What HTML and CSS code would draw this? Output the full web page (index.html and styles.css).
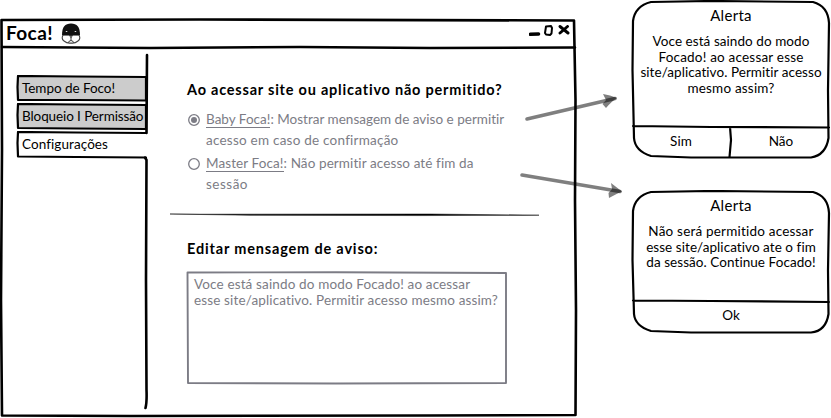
FILE: index.html
```html
<!DOCTYPE html>
<html lang="pt">
<head>
<meta charset="utf-8">
<title>Foca!</title>
<link rel="stylesheet" href="styles.css">
</head>
<body>
<main class="board">
  <section class="window">
    <svg class="frame" width="578" height="400" viewBox="0 18 578 400">
      <path d="M1.5 20L200 19.5L574 20.5L575.5 100L575 200L576 310L575.5 415L430 415.5L130 416L2 415.5L1 300L2 150Z"/>
      <path d="M2 47L150 48L300 47L430 48L575 47.5"/>
      <path d="M147 55L146.500 133M145 157.500L146.500 160L146 280L146.500 390Q147 402 145.500 408"/>
    </svg>
    <header class="titlebar">
      <h1 class="title">Foca!</h1>
      <svg class="seal" width="20" height="22" viewBox="0 0 20 22">
        <path d="M1 12C1 4 4 0.500 10 0.500S19 4 19 12Z" fill="#111"/>
        <path d="M2 12Q0 16 3 18Q6 20.500 10 20Q14 20.500 17 18Q20 16 18 12Z" fill="#fff" stroke="#444" stroke-width="1.1"/>
        <path d="M1.500 11.500H18.500" stroke="#111" stroke-width="1.5"/>
        <path d="M8.500 12.500H11.500L10 14.500ZM10 14V17M7.500 19.500Q8 17.500 10 17.500Q12 17.500 12.500 19.500" stroke="#222" stroke-width=".9"/>
        <path d="M4.800 8.500H6.300M13.700 8.500H15.200" stroke="#ddd" stroke-width="1.2"/>
      </svg>
      <svg class="controls" width="44" height="16" viewBox="0 0 44 16">
        <path d="M1.500 9.300L9.500 9" stroke-width="3.600"/>
        <path d="M17 1.500L22 1L23 3L22.500 8.500L21 10L17 9.500L16 8Z" stroke-width="2"/>
        <path d="M31 1.500L39 8M38.500 1.500L31 8" stroke-width="2.900"/>
      </svg>
    </header>
    <div class="body">
      <nav class="tabs">
        <a class="tab tab-one"><svg class="frame" width="131" height="28" viewBox="0 0 131 28"><path class="shade" d="M130 2L60 1.500L2 1L1.500 12L2 25L60 25L130 25.500Z"/></svg><span>Tempo de Foco!</span></a>
        <a class="tab tab-two"><svg class="frame" width="131" height="28" viewBox="0 0 131 28"><path class="shade" d="M130 2L60 1.500L2 1L1.500 12L2 25L60 25.500L130 26Z"/></svg><span>Bloqueio I Permissão</span></a>
        <a class="tab tab-three"><svg class="frame" width="131" height="28" viewBox="0 0 131 28"><path d="M130 2L60 1.500L2 1L1.500 12L2 25.500L60 26L130 26.500"/></svg><span>Configurações</span></a>
      </nav>
      <section class="content">
        <h2 class="question">Ao acessar site ou aplicativo não permitido?</h2>
        <div class="option">
          <svg class="radio" width="14" height="14"><circle cx="7" cy="7" r="5.300"/><circle class="dot" cx="7" cy="7" r="3"/></svg>
          <p><span class="o1"><u>Baby Foca!</u>: Mostrar mensagem de aviso e permitir</span><br><span class="o2">acesso em caso de confirmação</span></p>
        </div>
        <div class="option">
          <svg class="radio" width="14" height="14"><circle cx="7" cy="7" r="5.300"/></svg>
          <p><span class="o3"><u>Master Foca!</u>: Não permitir acesso até fim da</span><br><span class="o4">sessão</span></p>
        </div>
        <svg class="divider" width="370" height="4"><path d="M0 1L30 1.200L260 1L369 2.200L250 2.600L80 2.300Z"/></svg>
        <h2 class="edit">Editar mensagem de aviso:</h2>
        <div class="message">
          <svg class="frame" width="322" height="114"><path d="M1.500 1.500L150 1.200L320 2L320 112L150 112.500L2 112Z"/></svg>
          <p>Voce está saindo do modo Focado! ao acessar<br>esse site/aplicativo. Permitir acesso mesmo assim?</p>
        </div>
      </section>
    </div>
  </section>
  <aside class="alerts">
    <section class="alert alert-confirm">
      <svg class="frame" width="200" height="160"><path d="M20 2L80 1L182 2Q197 6 198 23L197 90L197.500 138Q195 155 180 157.500L60 157.500L20 156Q4 151 3 138L1.500 70L2 21Q4 6 20 2ZM2 126L80 127L198 127.500M99 127L100 140L98.500 157"/></svg>
      <h3>Alerta</h3>
      <p>Voce está saindo do modo<br><span class="even">Focado! ao acessar esse</span><br>site/aplicativo. Permitir acesso<br><span class="even">mesmo assim?</span></p>
      <footer><span>Sim</span><span>Não</span></footer>
    </section>
    <section class="alert alert-block">
      <svg class="frame" width="200" height="144"><path d="M20 2L80 1L182 2Q197 6 198 23L197 80L197.500 124Q195 141 180 142.500L60 142.500L20 141Q4 136 3 124L1.500 70L2 21Q4 6 20 2ZM2 110.500L80 111L198 112"/></svg>
      <h3>Alerta</h3>
      <p><span class="even">Não será permitido acessar</span><br>esse site/aplicativo ate o fim<br>da sessão. Continue Focado!</p>
      <footer><span>Ok</span></footer>
    </section>
  </aside>
  <svg class="arrows" width="831" height="418">
    <path class="shaft" d="M527 119L615 98.500M522 175L620 191.500"/>
    <path d="M603 94Q610 95 617 98Q612 101 606 108L602.500 104L606 100Z"/>
    <path d="M611 183L622 191.500Q616 194 609 198L608.500 193L612 189Z"/>
  </svg>
</main>
</body>
</html>
```
FILE: styles.css
```css
* { box-sizing: border-box; }
body, h1, h2, h3, p { margin: 0; }
body { background: #fff; color: #000; font: 13.5px/16px Lato, "Noto Sans", sans-serif; overflow: hidden; }
.board { position: relative; display: flex; width: 831px; height: 418px; }
.frame { position: absolute; left: 0; top: 0; fill: none; stroke: #000; stroke-width: 2.2; stroke-linejoin: round; stroke-linecap: round; pointer-events: none; }
.window { position: relative; width: 578px; height: 400px; margin-top: 18px; }
.window > .frame { stroke-width: 2.6; }
.titlebar { display: flex; height: 30px; padding: 3px 5px 0 6px; }
.title { width: 55px; font-size: 19px; line-height: 24px; letter-spacing: 0.4px; }
.seal { margin-top: 2px; fill: none; }
.controls { margin: 4px 0 0 auto; fill: none; stroke: #000; stroke-linecap: round; stroke-linejoin: round; }
.body { display: flex; }
.tabs { display: flex; flex-direction: column; width: 147px; padding: 27px 0 0 16px; }
.tab { position: relative; width: 131px; height: 28px; padding: 5px 0 0 6px; white-space: nowrap; }
.tab span { position: relative; }
.shade { fill: #ccc; }
.tab-one { letter-spacing: -0.05px; }
.tab-two { letter-spacing: -0.1px; }
.tab-three { letter-spacing: 0.08px; }
.content { padding: 33px 0 0 40px; white-space: nowrap; }
.content h2 { font-size: 14.5px; line-height: 18px; }
.question { letter-spacing: 0.78px; margin-bottom: 10px; }
.option { display: flex; gap: 5px; color: #7c7c85; line-height: 21px; margin-bottom: 2px; }
.option u { text-decoration: none; border-bottom: 1px solid #7c7c85; }
.radio { margin-top: 4px; fill: none; stroke: #7c7c85; stroke-width: 1.3; }
.radio .dot { fill: #7c7c85; stroke: none; }
.o1 { letter-spacing: 0.01px; }
.o2 { letter-spacing: 0.23px; }
.o3 { letter-spacing: 0.1px; }
.o4 { letter-spacing: 0.5px; }
.divider { display: block; margin: 18px 0 0 -17px; }
.divider path { fill: #000; stroke: #000; stroke-width: .5; }
.edit { margin: 23px 0 13px; letter-spacing: 0.83px; }
.message { position: relative; width: 322px; height: 114px; padding: 5px 0 0 8px; color: #7c7c85; margin-left: -1px; letter-spacing: 0.14px; }
.message .frame { stroke: #7c7c85; stroke-width: 1.9; }
.alerts { width: 200px; margin-left: 53px; }
.alert { position: relative; display: flex; flex-direction: column; width: 200px; padding-top: 6px; text-align: center; white-space: nowrap; letter-spacing: 0.06px; }
.alert-confirm { height: 160px; margin-bottom: 30px; }
.alert-block { height: 144px; }
.alert h3 { font-size: 15px; font-weight: 400; line-height: 18px; margin-bottom: 10px; letter-spacing: 0.3px; }
.alert p { line-height: 15.7px; }
.even { letter-spacing: 0.2px; }
.alert footer { display: flex; height: 32px; margin-top: auto; padding-top: 5px; }
.alert footer span { flex: 1; }
.arrows { position: absolute; left: 0; top: 0; pointer-events: none; fill: #000; fill-opacity: .5; }
.arrows .shaft { fill: none; stroke: #000; stroke-opacity: .5; stroke-width: 3.6; stroke-linecap: round; }
```
